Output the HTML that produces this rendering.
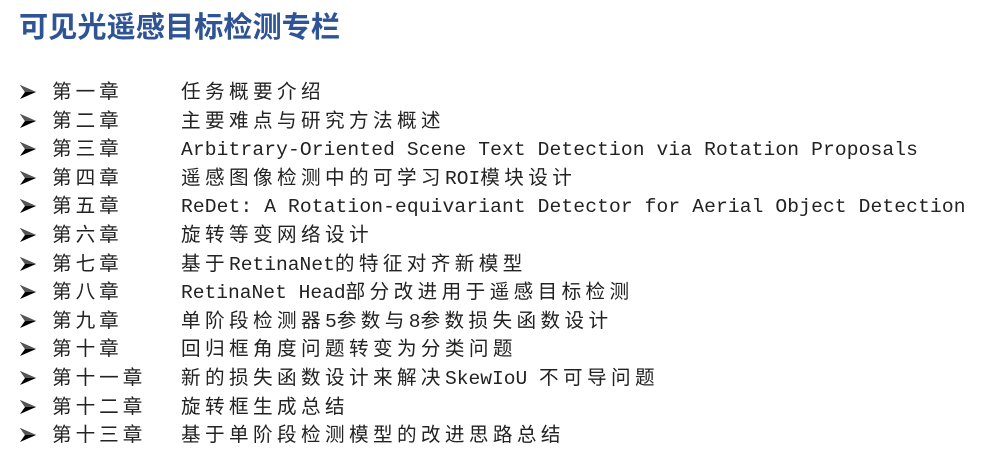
<!DOCTYPE html>
<html><head><meta charset="utf-8"><style>
body{margin:0;width:1001px;height:461px;background:#fff;overflow:hidden;position:relative;font-family:"Liberation Mono","Noto Sans CJK SC",monospace;}
h1{position:absolute;left:19px;top:4px;margin:0;font:bold 29.2px "Liberation Sans","Noto Sans CJK SC",sans-serif;color:#2f5496;letter-spacing:0px}
.r{position:absolute;left:0;height:28px;font-size:19.6px;line-height:28px;color:#222;white-space:pre}
.r svg{position:absolute;left:20px;top:6px}
.l{position:absolute;left:52px;letter-spacing:4px}
.c{position:absolute;left:181px}
.c i{font-style:normal;letter-spacing:0.13px}
.c b{font-weight:normal;letter-spacing:4.4px}
</style></head><body>
<h1>可见光遥感目标检测专栏</h1>
<div id="list"></div>
<script>
var rows=[["第一章","<b>任务概要介绍</b>"],["第二章","<b>主要难点与研究方法概述</b>"],["第三章","<i>Arbitrary-Oriented Scene Text Detection via Rotation Proposals</i>"],["第四章","<b>遥感图像检测中的可学习</b>ROI<b>模块设计</b>"],["第五章","<i>ReDet: A Rotation-equivariant Detector for Aerial Object Detection</i>"],["第六章","<b>旋转等变网络设计</b>"],["第七章","<b>基于</b>RetinaNet<b>的特征对齐新模型</b>"],["第八章","RetinaNet Head<b>部分改进用于遥感目标检测</b>"],["第九章","<b>单阶段检测器</b>5<b>参数与</b>8<b>参数损失函数设计</b>"],["第十章","<b>回归框角度问题转变为分类问题</b>"],["第十一章","<b>新的损失函数设计来解决</b>SkewIoU <b>不可导问题</b>"],["第十二章","<b>旋转框生成总结</b>"],["第十三章","<b>基于单阶段检测模型的改进思路总结</b>"]];
var h="";rows.forEach(function(r,i){var t=79+i*28.6;h+='<div class="r" style="top:'+t+'px;width:1001px"><svg width="16" height="14" viewBox="0 0 16 14"><path d="M0 0 L16 7 L0 14 L5 7 Z" fill="#000"/><path d="M0 0 L16 7 L5 7 Z" fill="#555"/></svg><span class="l">'+r[0]+'</span><span class="c">'+r[1]+'</span></div>';});
document.getElementById("list").innerHTML=h;
</script>
</body></html>
